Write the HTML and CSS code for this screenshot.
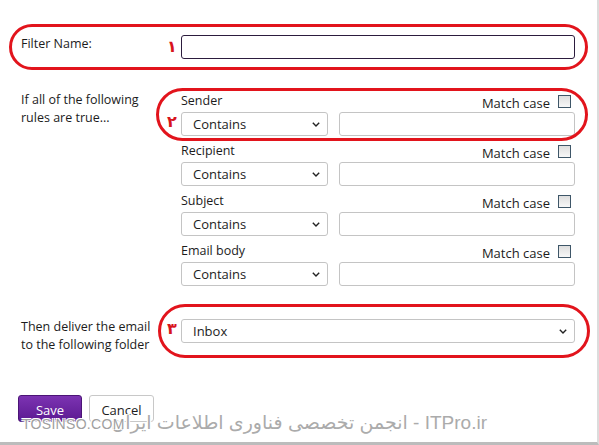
FILE: index.html
```html
<!DOCTYPE html>
<html lang="en">
  <head>
    <meta charset="UTF-8" />
    <meta name="viewport" content="width=device-width, initial-scale=1.0" />
    <title>New filter</title>
    <link rel="stylesheet" href="styles.css">
  </head>
  <body>
    <div class="dialog">
      <div class="form">
        <div class="row row-name">
          <div class="row-label">Filter Name:</div>
          <div class="text-input focused"></div>
        </div>

        <div class="row row-rules">
          <div class="row-label">If all of the following<br>rules are true...</div>
          <div class="rules">
            <div class="rule">
              <div class="rule-head">
                <span>Sender</span>
                <span class="match">Match case <span class="checkbox"></span></span>
              </div>
              <div class="rule-fields">
                <div class="select select-small">
                  <span>Contains</span>
                  <svg width="8" height="5" viewBox="0 0 8 5"><path d="M0.8 0.8 L4 4 L7.2 0.8" fill="none" stroke="#222" stroke-width="1.4"/></svg>
                </div>
                <div class="text-input"></div>
              </div>
            </div>
            <div class="rule">
              <div class="rule-head">
                <span>Recipient</span>
                <span class="match">Match case <span class="checkbox"></span></span>
              </div>
              <div class="rule-fields">
                <div class="select select-small">
                  <span>Contains</span>
                  <svg width="8" height="5" viewBox="0 0 8 5"><path d="M0.8 0.8 L4 4 L7.2 0.8" fill="none" stroke="#222" stroke-width="1.4"/></svg>
                </div>
                <div class="text-input"></div>
              </div>
            </div>
            <div class="rule">
              <div class="rule-head">
                <span>Subject</span>
                <span class="match">Match case <span class="checkbox"></span></span>
              </div>
              <div class="rule-fields">
                <div class="select select-small">
                  <span>Contains</span>
                  <svg width="8" height="5" viewBox="0 0 8 5"><path d="M0.8 0.8 L4 4 L7.2 0.8" fill="none" stroke="#222" stroke-width="1.4"/></svg>
                </div>
                <div class="text-input"></div>
              </div>
            </div>
            <div class="rule">
              <div class="rule-head">
                <span>Email body</span>
                <span class="match">Match case <span class="checkbox"></span></span>
              </div>
              <div class="rule-fields">
                <div class="select select-small">
                  <span>Contains</span>
                  <svg width="8" height="5" viewBox="0 0 8 5"><path d="M0.8 0.8 L4 4 L7.2 0.8" fill="none" stroke="#222" stroke-width="1.4"/></svg>
                </div>
                <div class="text-input"></div>
              </div>
            </div>
          </div>
        </div>

        <div class="row row-folder">
          <div class="row-label">Then deliver the email<br>to the following folder</div>
          <div class="select select-wide">
            <span>Inbox</span>
            <svg width="8" height="5" viewBox="0 0 8 5"><path d="M0.8 0.8 L4 4 L7.2 0.8" fill="none" stroke="#222" stroke-width="1.4"/></svg>
          </div>
        </div>

        <div class="actions">
          <button class="btn btn-save">Save</button>
          <button class="btn">Cancel</button>
        </div>
      </div>

      <!-- annotations drawn over the screenshot -->
      <div class="oval oval-1"></div>
      <div class="oval oval-2"></div>
      <div class="oval oval-3"></div>
      <span class="num num-1">۱</span>
      <span class="num num-2">۲</span>
      <span class="num num-3">۳</span>

      <div class="watermark">
        <span class="wm-site">TOSINSO.COM</span>
        <span class="wm-text" dir="rtl">ITPro.ir - انجمن تخصصی فناوری اطلاعات ایران</span>
      </div>
    </div>
  </body>
</html>
```

FILE: styles.css
```css
body {
  margin: 0;
  background-color: #ffffff;
  font-family: "Open Sans", "Noto Sans", sans-serif;
  font-size: 12.5px;
  color: #1c1c1c;
}
.dialog {
  position: relative;
  width: 597px;
  height: 442px;
  border-right: 2px solid #dcdcdc;
  border-bottom: 3px solid #bcbcbc;
  overflow: hidden;
}
.form {
  padding: 35px 0 0 21px;
}
.row {
  display: flex;
  align-items: flex-start;
}
.row-label {
  width: 160px;
  line-height: 18px;
  flex-shrink: 0;
}
.row-rules {
  margin-top: 27px;
}
.row-rules .row-label {
  margin-top: 5px;
}
.row-folder {
  margin-top: 33px;
}
.row-folder .row-label {
  margin-top: -1px;
}
.text-input {
  box-sizing: border-box;
  height: 24px;
  width: 394px;
  border: 1px solid #c4c4c4;
  border-radius: 3px;
  background-color: #fff;
}
.text-input.focused {
  border-color: #2c1c3e;
}
.rules {
  width: 394px;
}
.rule-head {
  height: 26px;
  display: flex;
  justify-content: space-between;
  align-items: flex-end;
  line-height: 18px;
  padding-bottom: 2px;
  box-sizing: border-box;
}
.match {
  display: flex;
  align-items: center;
  gap: 8px;
  font-size: 13px;
  margin-bottom: -2px;
  margin-right: 4px;
}
.checkbox {
  display: inline-block;
  box-sizing: border-box;
  width: 13px;
  height: 13px;
  border: 1px solid #3e5668;
  background: linear-gradient(#dedede, #f7f7f7);
  margin-top: -4px;
}
.rule-fields {
  display: flex;
  gap: 11px;
}
.rule-fields .text-input {
  flex: 1;
  width: auto;
}
.select {
  box-sizing: border-box;
  height: 24px;
  display: flex;
  align-items: center;
  justify-content: space-between;
  padding: 0 7px 0 11px;
  border: 1px solid #c4c4c4;
  border-radius: 3px;
  background-color: #fff;
  font-size: 13px;
}
.select-small {
  width: 147px;
}
.select-wide {
  width: 394px;
}
.actions {
  margin-top: 41px;
  margin-left: -3px;
  display: flex;
  gap: 7px;
}
.btn {
  box-sizing: border-box;
  height: 27px;
  padding: 3px 0 0;
  border: 1px solid #c8c8c8;
  border-radius: 3px;
  background-color: #fff;
  font-family: "Open Sans", "Noto Sans", sans-serif;
  font-size: 13px;
  line-height: 18px;
  color: #1c1c1c;
  width: 65px;
}
.btn-save {
  width: 64px;
  background: linear-gradient(#7c33b2, #5c1a92);
  border-color: #4b1476;
  color: #fff;
}
.oval {
  position: absolute;
  box-sizing: border-box;
  border: 3px solid #e2141c;
  border-radius: 28px;
}
.oval-1 {
  left: 9px;
  top: 24px;
  width: 579px;
  height: 46px;
}
.oval-2 {
  left: 156px;
  top: 88px;
  width: 432px;
  height: 53px;
}
.oval-3 {
  left: 158px;
  top: 304px;
  width: 432px;
  height: 54px;
}
.num {
  position: absolute;
  left: 167px;
  color: #d8141c;
  font-family: "DejaVu Sans", sans-serif;
  font-weight: bold;
  font-size: 16px;
  line-height: 16px;
}
.num-1 {
  top: 39px;
}
.num-2 {
  top: 114px;
}
.num-3 {
  top: 321px;
}
.watermark {
  position: absolute;
  left: 0;
  top: 410px;
  width: 100%;
  height: 26px;
  color: #ababab;
  text-shadow: 1px 1px 0 #fff, -1px -1px 0 #fff, 1px -1px 0 #fff, -1px 1px 0 #fff;
}
.wm-site {
  position: absolute;
  left: 22px;
  top: 6px;
  font-family: "Liberation Sans", Arial, sans-serif;
  font-size: 14px;
  letter-spacing: 0.3px;
  color: #a0a0a0;
  z-index: 1;
}
.wm-text {
  position: absolute;
  right: 110px;
  top: 1px;
  font-family: "Liberation Sans", "DejaVu Sans", sans-serif;
  font-size: 19px;
  white-space: nowrap;
}
```
